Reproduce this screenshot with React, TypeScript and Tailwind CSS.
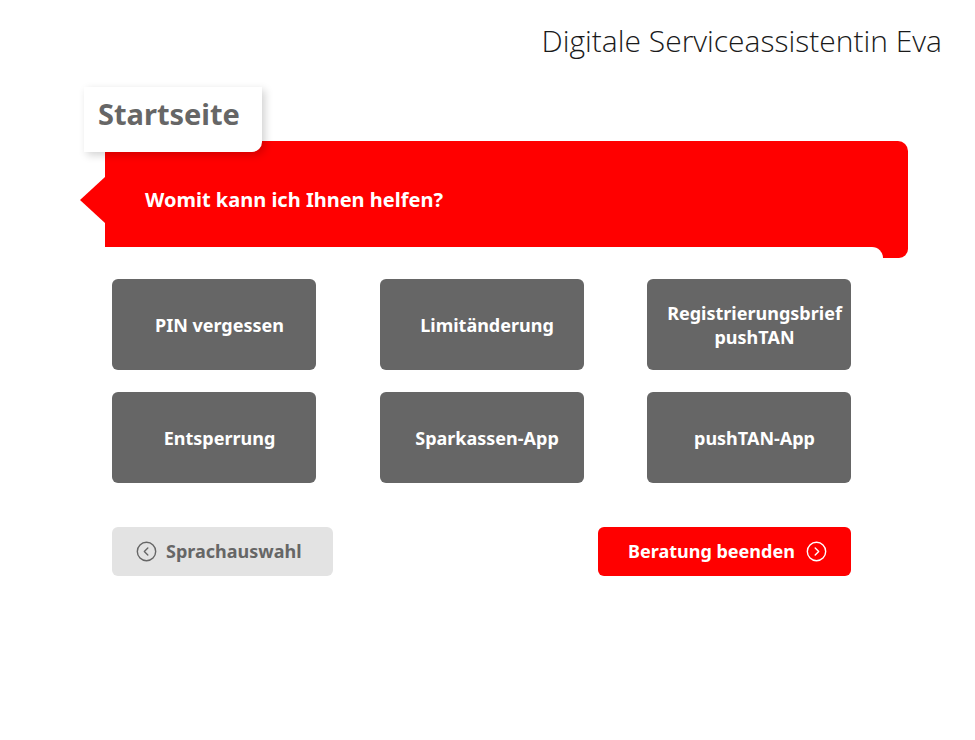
import React from 'react'

const TOPICS = [
  ['PIN vergessen'],
  ['Limitänderung'],
  ['Registrierungsbrief', 'pushTAN'],
  ['Entsperrung'],
  ['Sparkassen-App'],
  ['pushTAN-App'],
]

function CircleChevron({ dir }: { dir: 'left' | 'right' }) {
  return (
    <svg width="21" height="21" viewBox="0 0 24 24" fill="none" stroke="currentColor" strokeWidth="1.6" strokeLinecap="round" strokeLinejoin="round">
      <circle cx="12" cy="12" r="10.5" />
      {dir === 'left' ? <path d="M13.5 8l-4 4 4 4" /> : <path d="M10.5 8l4 4-4 4" />}
    </svg>
  )
}

export default function App() {
  return (
    <div className="w-[975px] h-[740px] bg-white" style={{ fontFamily: '"Noto Sans", sans-serif' }}>
      {/* header */}
      <div className="flex justify-end pr-[33px] pt-[21px]">
        <h1 className="text-[30px] leading-[40px] font-light text-[#1a1a1a]" style={{ fontFamily: '"Open Sans", sans-serif' }}>
          Digitale Serviceassistentin Eva
        </h1>
      </div>

      {/* tab */}
      <div className="relative z-10 mt-[26px] ml-[84px] w-[178px] h-[65px] bg-white rounded-br-[10px] shadow-[3px_3px_8px_rgba(0,0,0,0.18)] pl-[14px] pt-[7px]">
        <span className="text-[29px] leading-[40px] font-bold text-[#666666]">Startseite</span>
      </div>

      {/* banner */}
      <div className="relative -mt-[11px] ml-[105px] w-[803px] h-[106px] bg-[#ff0000] rounded-tr-[10px] flex items-center pl-[40px] pt-[12px]">
        <div className="absolute right-full top-[36px] w-0 h-0 border-y-[23px] border-y-transparent border-r-[25px] border-r-[#ff0000]" />
        <span className="text-[20px] font-bold text-white">Womit kann ich Ihnen helfen?</span>
        <div className="absolute right-0 top-full w-[36px] h-[11px] bg-[#ff0000] rounded-br-[9px]">
          <div className="w-[11px] h-[11px] bg-white rounded-tr-[11px]" />
        </div>
      </div>

      {/* topics */}
      <div className="mt-[32px] ml-[112px] grid grid-cols-[204px_204px_204px] gap-x-[63.5px] gap-y-[22px]">
        {TOPICS.map(t => (
          <button key={t.join()} className="h-[91px] rounded-[6px] bg-[#666666] flex flex-col items-center justify-center pl-[11px] text-white text-[18px] leading-[24px] font-bold">
            {t.map(l => <span key={l}>{l}</span>)}
          </button>
        ))}
      </div>

      {/* actions */}
      <div className="mt-[44px] ml-[112px] w-[739px] flex justify-between">
        <button className="w-[221px] h-[49px] rounded-[6px] bg-[#e3e3e3] text-[#666666] flex items-center pl-[24px] gap-[9px] text-[18px] font-bold">
          <CircleChevron dir="left" />
          Sprachauswahl
        </button>
        <button className="w-[253px] h-[49px] rounded-[6px] bg-[#ff0000] text-white flex items-center pl-[30px] gap-[11px] text-[18px] font-bold">
          Beratung beenden
          <CircleChevron dir="right" />
        </button>
      </div>
    </div>
  )
}
